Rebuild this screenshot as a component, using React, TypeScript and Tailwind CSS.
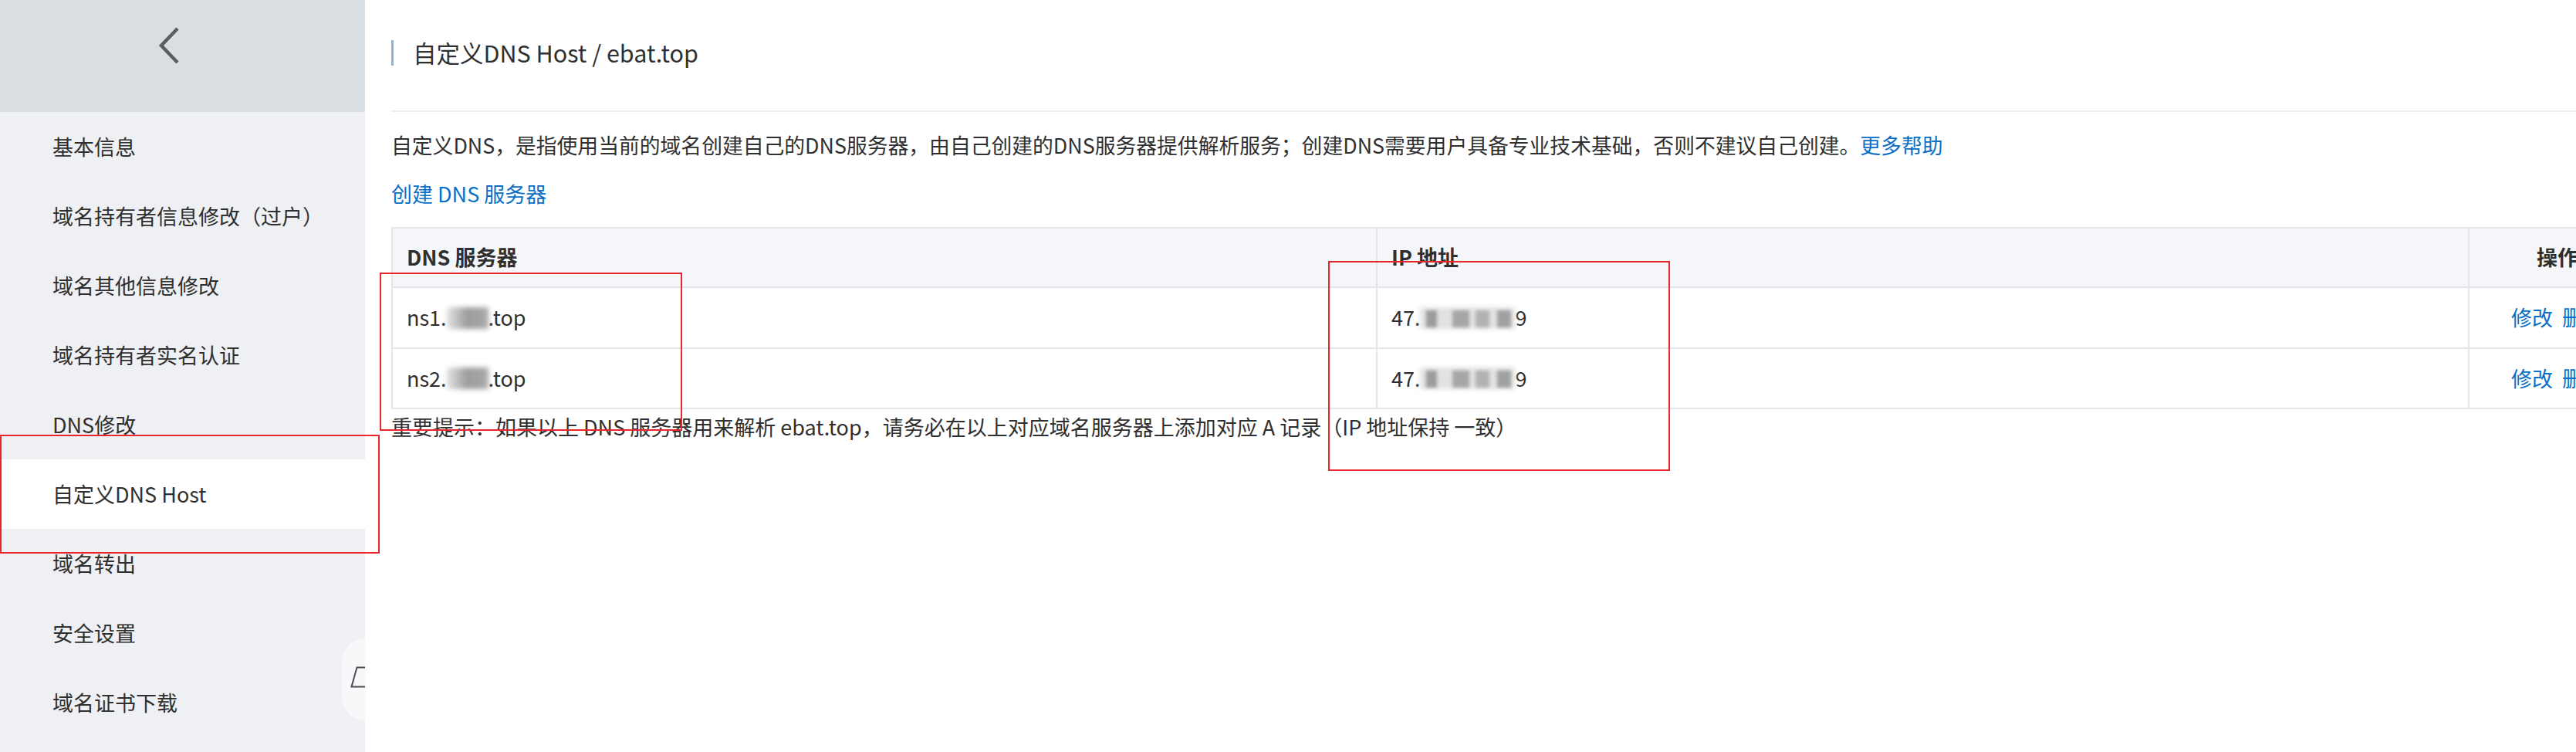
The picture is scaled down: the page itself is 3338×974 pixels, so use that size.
import React from "react"

const menu = [
  "基本信息",
  "域名持有者信息修改（过户）",
  "域名其他信息修改",
  "域名持有者实名认证",
  "DNS修改",
  "自定义DNS Host",
  "域名转出",
  "安全设置",
  "域名证书下载",
]

function Blur({ w }: { w: number }) {
  return (
    <span className="relative inline-block h-[28px] align-middle" style={{ width: w }}>
      <span className="absolute inset-0 bg-linear-to-r from-[#e4e4e4] via-[#9c9c9c] to-[#aaaaaa] blur-[3px]" />
    </span>
  )
}

function IpBlur() {
  return (
    <span className="relative inline-block h-[28px] w-[123px] align-middle">
      <span className="absolute inset-0 bg-[#e2e2e2] blur-[3px]" />
      <span className="absolute left-[8px] top-[4px] h-[22px] w-[14px] bg-[#9c9c9c] blur-[2px]" />
      <span className="absolute left-[42px] top-[4px] h-[22px] w-[22px] bg-[#a6a6a6] blur-[2px]" />
      <span className="absolute left-[72px] top-[4px] h-[22px] w-[18px] bg-[#b2b2b2] blur-[2px]" />
      <span className="absolute left-[100px] top-[4px] h-[22px] w-[18px] bg-[#a0a0a0] blur-[2px]" />
    </span>
  )
}

const rows = [
  { ns: "ns1.", ip: "47." },
  { ns: "ns2.", ip: "47." },
]

export default function App() {
  return (
    <div className="relative flex h-[974px] w-[3338px] overflow-hidden bg-white text-[#2f2f2f] font-['Noto_Sans_CJK_SC','Noto_Sans',sans-serif]">
      <aside className="flex w-[473px] shrink-0 flex-col bg-[#eef0f4]">
        <div className="h-[145px] bg-[#d9dee3] pl-[205px] pt-[34px]">
          <svg width="28" height="50" viewBox="0 0 28 50">
            <polyline points="25,3 4,25 25,47" fill="none" stroke="#595e63" strokeWidth="4.5" />
          </svg>
        </div>
        {menu.map((item) => (
          <div
            key={item}
            className={
              item === "自定义DNS Host"
                ? "flex h-[90px] items-center bg-white pl-[68px] text-[27px]"
                : "flex h-[90px] items-center pl-[68px] text-[27px]"
            }
          >
            {item}
          </div>
        ))}
      </aside>

      <main className="min-w-0 flex-1 overflow-hidden pl-[34px]">
        <div className="flex h-[143px] items-start pt-[52px]">
          <div className="h-[33px] w-[3px] bg-[#8cb5dc]" />
          <h1 className="ml-[25px] text-[30.5px] leading-[33px]">自定义DNS Host / ebat.top</h1>
        </div>
        <div className="h-[2px] bg-[#eceef1]" />

        <p className="mt-[23px] text-[26.8px] leading-[40px]">
          自定义DNS，是指使用当前的域名创建自己的DNS服务器，由自己创建的DNS服务器提供解析服务；创建DNS需要用户具备专业技术基础，否则不建议自己创建。
          <a className="text-[#0a6fc7]">更多帮助</a>
        </p>
        <p className="mt-[23px] text-[27px] leading-[40px] text-[#0a6fc7]">创建 DNS 服务器</p>

        <div className="mt-[23px] w-[2919px] border-2 border-[#e3e5e9] text-[27px]">
          <div className="grid h-[77px] grid-cols-[1274px_1415px_230px] border-b-2 border-[#e3e5e9] bg-[#f5f6f9] font-bold">
            <div className="flex items-center pl-[18px]">DNS 服务器</div>
            <div className="flex items-center border-l-2 border-[#e3e5e9] pl-[18px]">IP 地址</div>
            <div className="flex items-center justify-center border-l-2 border-[#e3e5e9]">操作</div>
          </div>
          {rows.map((r, i) => (
            <div
              key={r.ns}
              className={
                i === 0
                  ? "grid h-[79px] grid-cols-[1274px_1415px_230px] border-b-2 border-[#e3e5e9]"
                  : "grid h-[76px] grid-cols-[1274px_1415px_230px]"
              }
            >
              <div className="flex items-center pl-[18px]">
                {r.ns}
                <Blur w={54} />
                .top
              </div>
              <div className="flex items-center border-l-2 border-[#e3e5e9] pl-[18px]">
                {r.ip}
                <IpBlur />
                9
              </div>
              <div className="flex items-center justify-center gap-[12px] border-l-2 border-[#e3e5e9] text-[#0a6fc7]">
                <span>修改</span>
                <span>删除</span>
              </div>
            </div>
          ))}
        </div>
        <p className="mt-[3px] text-[27px] leading-[40px]">
          重要提示：如果以上 DNS 服务器用来解析 ebat.top，请务必在以上对应域名服务器上添加对应 A 记录（IP 地址保持 一致）
        </p>
      </main>

      <div className="absolute left-[443px] top-[827px] h-[106px] w-[30px] overflow-hidden rounded-l-[30px] bg-[#f7f8fa]">
        <svg className="absolute left-[11px] top-[36px]" width="19" height="28" viewBox="0 0 19 28">
          <path d="M19 1.5 H8.5 L1.5 26.5 H19" fill="none" stroke="#4a4d52" strokeWidth="2" />
        </svg>
      </div>

      <div className="absolute left-0 top-[563px] h-[154px] w-[492px] border-2 border-[#e8262c]" />
      <div className="absolute left-[492px] top-[353px] h-[205px] w-[392px] border-2 border-[#e8262c]" />
      <div className="absolute left-[1721px] top-[338px] h-[272px] w-[443px] border-2 border-[#e8262c]" />
    </div>
  )
}
